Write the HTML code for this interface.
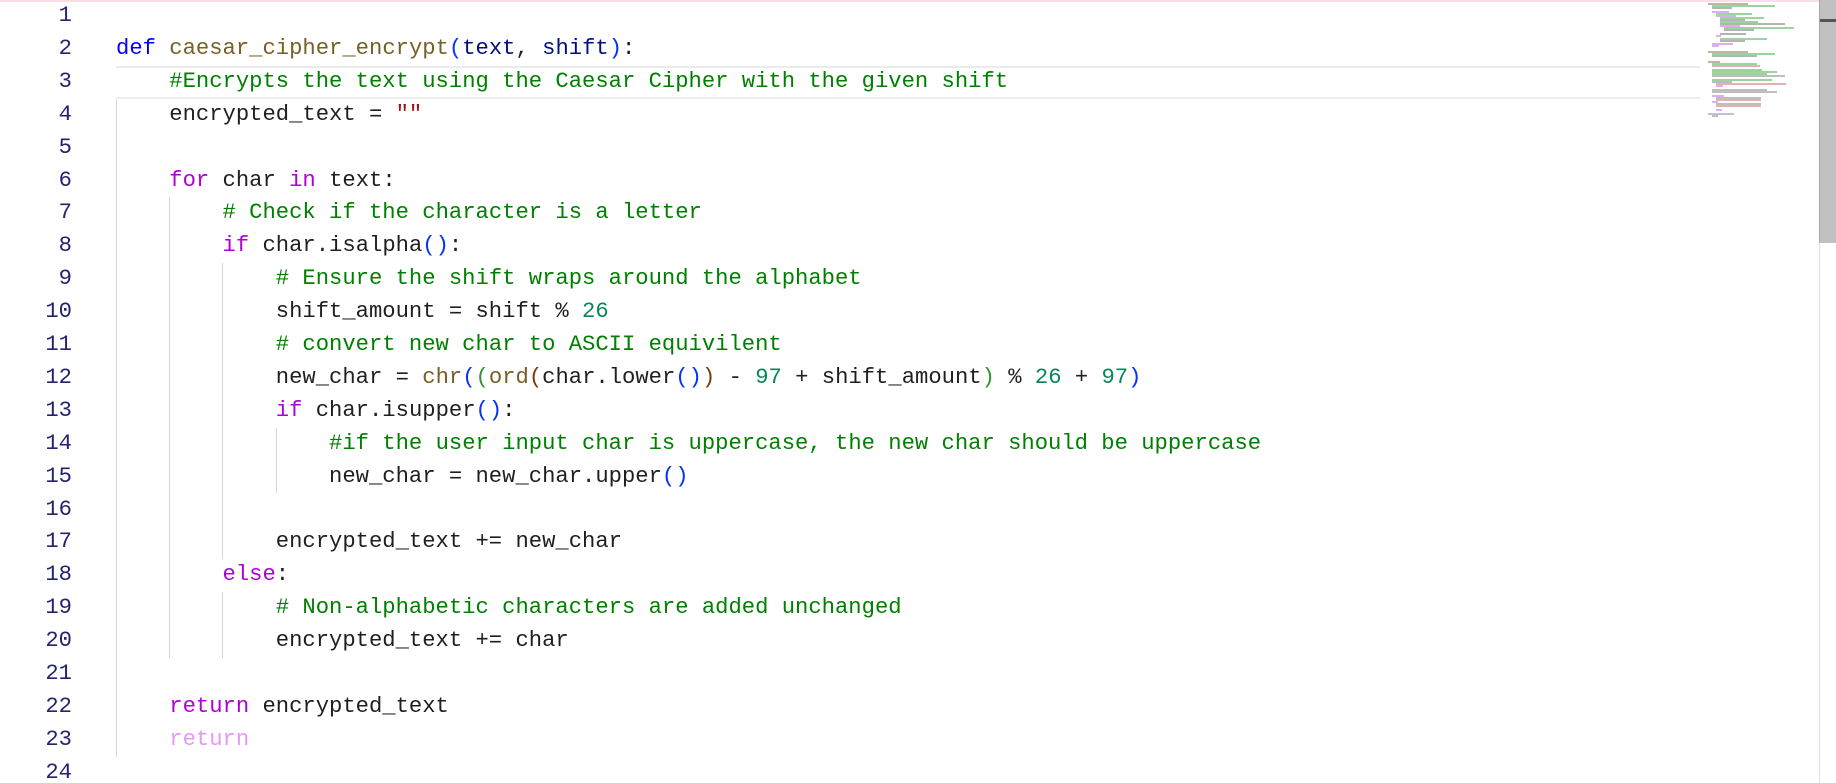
<!DOCTYPE html>
<html><head><meta charset="utf-8"><style>
html,body{margin:0;padding:0;background:#fff;width:1836px;height:783px;overflow:hidden;position:relative}
.top{position:absolute;left:0;top:0;width:1819px;height:2px;background:#fbdde6}
.ln{position:absolute;left:0;width:72px;text-align:right;font:22.2px "Liberation Mono",monospace;color:#23236e;line-height:32.9px;height:32.9px}
.cd{position:absolute;left:116px;font:22.2px "Liberation Mono",monospace;color:#1f1f1f;line-height:32.9px;height:32.9px;white-space:pre}
.g{position:absolute;width:1px;background:#d6d6d6}
.k{color:#0000ff}.f{color:#795e26}.p{color:#001080}.c{color:#008000}.kw{color:#af00db}.n{color:#098658}.s{color:#a31515}
.b1{color:#0431fa}.b2{color:#319331}.b3{color:#7b3814}.gh{color:#e39af5}
.cur{position:absolute;left:116px;top:66px;width:1584px;height:29px;border-top:2px solid #ececec;border-bottom:2px solid #ececec}
.sb{position:absolute;left:1819px;top:0;width:17px;height:243px;background:#c1c1c1;border-left:1px solid #a8a8a8;box-sizing:border-box}
.sbl{position:absolute;left:1819px;top:243px;width:1px;height:540px;background:#e0e0e0}
.th{position:absolute;left:1820px;top:19px;width:16px;height:3px;background:#555}
.mm{position:absolute;height:2px;opacity:.55}
</style></head><body>
<div class="top"></div>
<div class="cur"></div>
<div class="g" style="left:116px;top:98.7px;height:658px"></div>
<div class="g" style="left:169px;top:197.4px;height:460.6px"></div>
<div class="g" style="left:222px;top:263.2px;height:296px"></div>
<div class="g" style="left:222px;top:592.2px;height:65.8px"></div>
<div class="g" style="left:276px;top:427.7px;height:65.8px"></div>

<div class="ln" style="top:0px">1</div>
<div class="ln" style="top:32.9px">2</div>
<div class="ln" style="top:65.8px">3</div>
<div class="ln" style="top:98.7px">4</div>
<div class="ln" style="top:131.6px">5</div>
<div class="ln" style="top:164.5px">6</div>
<div class="ln" style="top:197.4px">7</div>
<div class="ln" style="top:230.3px">8</div>
<div class="ln" style="top:263.2px">9</div>
<div class="ln" style="top:296.1px">10</div>
<div class="ln" style="top:329px">11</div>
<div class="ln" style="top:361.9px">12</div>
<div class="ln" style="top:394.8px">13</div>
<div class="ln" style="top:427.7px">14</div>
<div class="ln" style="top:460.6px">15</div>
<div class="ln" style="top:493.5px">16</div>
<div class="ln" style="top:526.4px">17</div>
<div class="ln" style="top:559.3px">18</div>
<div class="ln" style="top:592.2px">19</div>
<div class="ln" style="top:625.1px">20</div>
<div class="ln" style="top:658px">21</div>
<div class="ln" style="top:690.9px">22</div>
<div class="ln" style="top:723.8px">23</div>
<div class="ln" style="top:756.7px">24</div>

<div class="cd" style="top:32.9px"><span class="k">def</span> <span class="f">caesar_cipher_encrypt</span><span class="b1">(</span><span class="p">text</span>, <span class="p">shift</span><span class="b1">)</span>:</div>
<div class="cd" style="top:65.8px">    <span class="c">#Encrypts the text using the Caesar Cipher with the given shift</span></div>
<div class="cd" style="top:98.7px">    encrypted_text = <span class="s">""</span></div>
<div class="cd" style="top:164.5px">    <span class="kw">for</span> char <span class="kw">in</span> text:</div>
<div class="cd" style="top:197.4px">        <span class="c"># Check if the character is a letter</span></div>
<div class="cd" style="top:230.3px">        <span class="kw">if</span> char.isalpha<span class="b1">()</span>:</div>
<div class="cd" style="top:263.2px">            <span class="c"># Ensure the shift wraps around the alphabet</span></div>
<div class="cd" style="top:296.1px">            shift_amount = shift % <span class="n">26</span></div>
<div class="cd" style="top:329px">            <span class="c"># convert new char to ASCII equivilent</span></div>
<div class="cd" style="top:361.9px">            new_char = <span class="f">chr</span><span class="b1">(</span><span class="b2">(</span><span class="f">ord</span><span class="b3">(</span>char.lower<span class="b1">()</span><span class="b3">)</span> - <span class="n">97</span> + shift_amount<span class="b2">)</span> % <span class="n">26</span> + <span class="n">97</span><span class="b1">)</span></div>
<div class="cd" style="top:394.8px">            <span class="kw">if</span> char.isupper<span class="b1">()</span>:</div>
<div class="cd" style="top:427.7px">                <span class="c">#if the user input char is uppercase, the new char should be uppercase</span></div>
<div class="cd" style="top:460.6px">                new_char = new_char.upper<span class="b1">()</span></div>
<div class="cd" style="top:526.4px">            encrypted_text += new_char</div>
<div class="cd" style="top:559.3px">        <span class="kw">else</span>:</div>
<div class="cd" style="top:592.2px">            <span class="c"># Non-alphabetic characters are added unchanged</span></div>
<div class="cd" style="top:625.1px">            encrypted_text += char</div>
<div class="cd" style="top:690.9px">    <span class="kw">return</span> encrypted_text</div>
<div class="cd" style="top:723.8px">    <span class="gh">return</span></div>

<!-- minimap -->
<div class="mm" style="left:1708px;top:3px;width:40px;background:#8a7a50"></div>
<div class="mm" style="left:1712px;top:5px;width:63px;background:#4caf50"></div>
<div class="mm" style="left:1712px;top:7px;width:20px;background:#777"></div>
<div class="mm" style="left:1712px;top:11px;width:17px;background:#c070e0"></div>
<div class="mm" style="left:1716px;top:13px;width:36px;background:#4caf50"></div>
<div class="mm" style="left:1716px;top:15px;width:20px;background:#c070e0"></div>
<div class="mm" style="left:1720px;top:17px;width:44px;background:#4caf50"></div>
<div class="mm" style="left:1720px;top:19px;width:25px;background:#777"></div>
<div class="mm" style="left:1720px;top:21px;width:38px;background:#4caf50"></div>
<div class="mm" style="left:1720px;top:23px;width:65px;background:#777"></div>
<div class="mm" style="left:1720px;top:25px;width:20px;background:#c070e0"></div>
<div class="mm" style="left:1724px;top:27px;width:70px;background:#4caf50"></div>
<div class="mm" style="left:1724px;top:29px;width:30px;background:#777"></div>
<div class="mm" style="left:1720px;top:33px;width:26px;background:#777"></div>
<div class="mm" style="left:1716px;top:35px;width:5px;background:#c070e0"></div>
<div class="mm" style="left:1720px;top:38px;width:47px;background:#4caf50"></div>
<div class="mm" style="left:1720px;top:40px;width:25px;background:#777"></div>
<div class="mm" style="left:1712px;top:43px;width:21px;background:#c070e0"></div>
<div class="mm" style="left:1712px;top:45px;width:7px;background:#c070e0"></div>
<div class="mm" style="left:1708px;top:51px;width:40px;background:#8a7a50"></div>
<div class="mm" style="left:1712px;top:53px;width:63px;background:#4caf50"></div>
<div class="mm" style="left:1712px;top:55px;width:45px;background:#777"></div>
<div class="mm" style="left:1708px;top:61px;width:12px;background:#8a7a50"></div>
<div class="mm" style="left:1712px;top:63px;width:45px;background:#4caf50"></div>
<div class="mm" style="left:1712px;top:65px;width:48px;background:#d07070"></div>
<div class="mm" style="left:1712px;top:69px;width:50px;background:#4caf50"></div>
<div class="mm" style="left:1712px;top:71px;width:65px;background:#4caf50"></div>
<div class="mm" style="left:1712px;top:73px;width:55px;background:#4caf50"></div>
<div class="mm" style="left:1712px;top:75px;width:73px;background:#888"></div>
<div class="mm" style="left:1712px;top:79px;width:60px;background:#4caf50"></div>
<div class="mm" style="left:1712px;top:81px;width:20px;background:#8a7aa0"></div>
<div class="mm" style="left:1716px;top:83px;width:70px;background:#d07070"></div>
<div class="mm" style="left:1716px;top:85px;width:7px;background:#c070e0"></div>
<div class="mm" style="left:1712px;top:89px;width:55px;background:#888"></div>
<div class="mm" style="left:1712px;top:91px;width:65px;background:#888"></div>
<div class="mm" style="left:1712px;top:95px;width:12px;background:#c070e0"></div>
<div class="mm" style="left:1716px;top:97px;width:45px;background:#888"></div>
<div class="mm" style="left:1716px;top:99px;width:45px;background:#d07070"></div>
<div class="mm" style="left:1712px;top:101px;width:6px;background:#c070e0"></div>
<div class="mm" style="left:1716px;top:103px;width:45px;background:#888"></div>
<div class="mm" style="left:1716px;top:105px;width:45px;background:#d07070"></div>
<div class="mm" style="left:1716px;top:109px;width:6px;background:#c070e0"></div>
<div class="mm" style="left:1708px;top:113px;width:26px;background:#8a8ac0"></div>
<div class="mm" style="left:1712px;top:115px;width:6px;background:#888"></div>

<div class="sb"></div>
<div class="th"></div>
<div class="sbl"></div>
</body></html>
